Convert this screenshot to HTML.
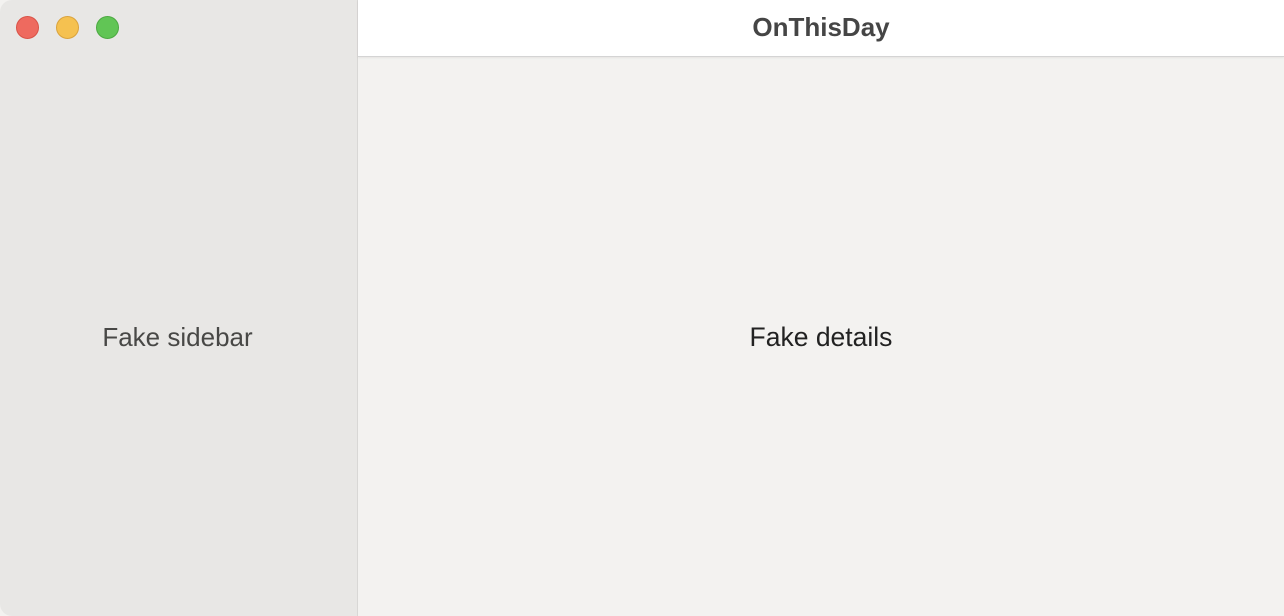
<!DOCTYPE html>
<html><head><style>
html,body{margin:0;padding:0;width:1284px;height:616px;overflow:hidden;background:#f3f2f0;font-family:"Liberation Sans",sans-serif}
.side{position:absolute;left:0;top:0;width:357px;height:616px;background:#e8e7e5;border-right:1px solid #d8d7d5;border-top-left-radius:12px;border-bottom-left-radius:12px}
.dot{position:absolute;top:16px;width:23px;height:23px;border-radius:50%;box-sizing:border-box}
.top{position:absolute;left:358px;top:0;width:926px;height:56px;background:#fff;border-bottom:1px solid #d4d4d4;box-shadow:0 1px 2px rgba(0,0,0,0.06)}
.title{position:absolute;left:0;right:0;top:12px;text-align:center;font-weight:bold;font-size:26px;color:#454545}
.t{position:absolute;font-size:26px}
</style></head><body>
<div class="side">
<div class="dot" style="left:16px;background:#ee6a5f;border:1px solid #d95347"></div>
<div class="dot" style="left:56px;background:#f5c150;border:1px solid #daa33c"></div>
<div class="dot" style="left:96px;background:#61c555;border:1px solid #4ca941"></div>
<div class="t" style="left:0;width:355px;text-align:center;top:322px;color:#484846">Fake sidebar</div>
</div>
<div class="top"><div class="title">OnThisDay</div></div>
<div class="t" style="left:358px;width:926px;text-align:center;top:322px;color:#222;font-size:26.5px">Fake details</div>
</body></html>
